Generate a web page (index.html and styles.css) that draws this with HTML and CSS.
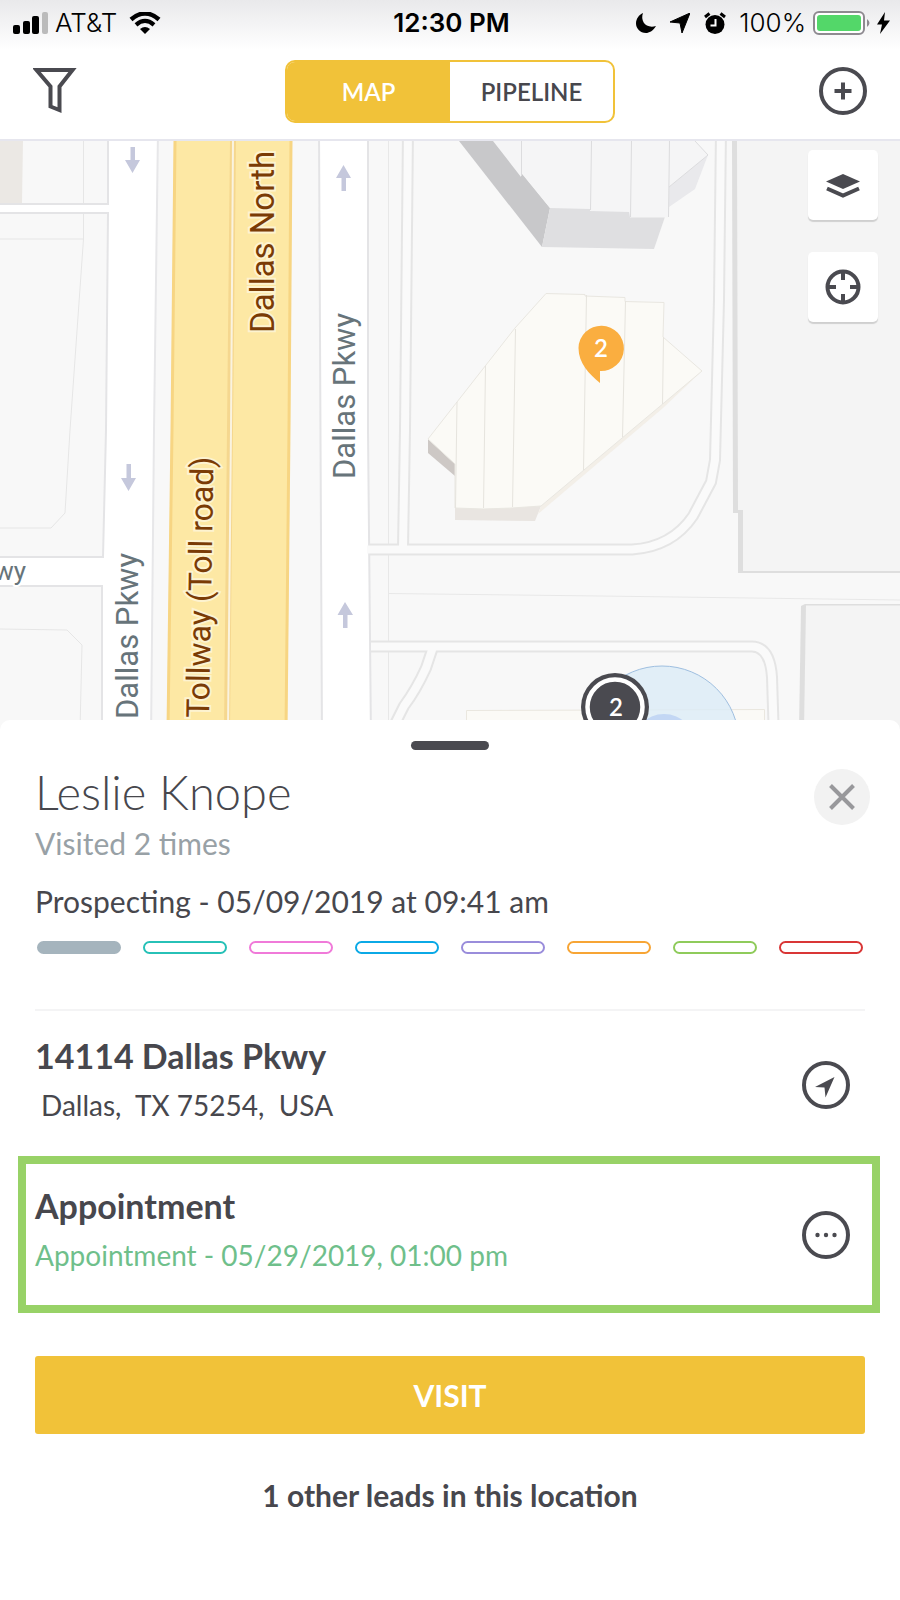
FILE: index.html
```html
<!DOCTYPE html>
<html lang="en">
<head>
    <meta charset="UTF-8">
    <meta name="viewport" content="width=device-width, initial-scale=1.0">
    <title>Leads Map</title>
    <link rel="stylesheet" href="styles.css">
</head>
<body>
    <header class="top">
        <div class="status-bar">
            <div class="status-left">
                <svg width="36" height="22" viewBox="0 0 36 22">
                    <rect x="0" y="13" width="7" height="9" rx="2"/>
                    <rect x="10" y="9" width="7" height="13" rx="2"/>
                    <rect x="19" y="4" width="7" height="18" rx="2"/>
                    <rect x="29" y="0" width="6" height="22" rx="2" fill="#bbb"/>
                </svg>
                <span class="carrier">AT&amp;T</span>
                <svg width="32" height="22" viewBox="0 0 32 22">
                    <path d="M2 7.500 Q16 -4.500 30 7.500" fill="none" stroke="#000" stroke-width="4.500"/>
                    <path d="M7 12.800 Q16 5 25 12.800" fill="none" stroke="#000" stroke-width="4.200"/>
                    <path d="M11 17 Q16 13 21 17 L16 22 Z"/>
                </svg>
            </div>
            <span class="clock">12:30 PM</span>
            <div class="status-right">
                <svg width="20" height="20" viewBox="0 0 20 20">
                    <path d="M7 0 C4 8 10 16 20 13 C17 18 13 20 10 20 C4 20 0 15 0 10.500 C0 6 3 1.500 7 0Z"/>
                </svg>
                <svg width="20" height="20" viewBox="0 0 20 20">
                    <path d="M20 0 L12 20 L10 10 L0 9 Z" stroke="#000" stroke-linejoin="round"/>
                </svg>
                <svg width="22" height="22" viewBox="0 0 22 22">
                    <circle cx="11" cy="12.500" r="9.500"/>
                    <path d="M1 5 L5.500 1.500 M21 5 L16.500 1.500" stroke="#000" stroke-width="3"/>
                    <path d="M11.500 7 V13.500 H6.500" fill="none" stroke="#fff" stroke-width="2"/>
                </svg>
                <span class="percent">100%</span>
                <svg width="58" height="24" viewBox="0 0 58 24">
                    <rect x="1" y="1" width="50" height="22" rx="5" fill="#fff" stroke="#8e8a90" stroke-width="2"/>
                    <rect x="4" y="4" width="44" height="16" rx="3" fill="#53d769"/>
                    <path d="M54 8 Q59 12 54 16Z" fill="#8e8a90"/>
                </svg>
                <svg width="13" height="22" viewBox="0 0 13 22">
                    <path d="M8 0 L0 12.500 H5 L3 22 L13 8.500 H7 Z"/>
                </svg>
            </div>
        </div>
        <nav class="nav-bar">
            <button class="icon-btn" aria-label="Filter">
                <svg width="48" height="48" viewBox="0 0 48 48">
                    <path d="M3.500 3 H39.500 L26.500 19.500 V43 L17.500 39.500 V19.500 Z" fill="none" stroke="#4a4a50" stroke-width="4"/>
                </svg>
            </button>
            <div class="tabs">
                <button class="tab active">MAP</button>
                <button class="tab">PIPELINE</button>
            </div>
            <button class="icon-btn" aria-label="Add lead">
                <svg width="48" height="48" viewBox="0 0 48 48">
                    <circle cx="24" cy="24" r="22" fill="none" stroke="#4a4a50" stroke-width="4"/>
                    <path d="M24 15.500 V32.500 M15.500 24 H32.500" stroke="#4a4a50" stroke-width="4"/>
                </svg>
            </button>
        </nav>
    </header>

    <main>
        <section class="map">
            <svg class="map-canvas" viewBox="0 141 900 589" preserveAspectRatio="xMidYMid slice">
                <rect x="0" y="141" width="900" height="589" fill="#f8f8f8"/>

                <!-- left blocks and southbound road -->
                <path d="M-5 130 H158 L154 430 L151 740 H-5Z" fill="#fff" stroke="#e7e7e9" stroke-width="2"/>
                <g fill="#f8f8f8" stroke="#e4e4e6" stroke-width="2">
                    <path d="M-5 130 H108 V204 H-5Z"/>
                    <path d="M-5 213 H108 L106 430 L103 557 H-5Z"/>
                    <path d="M-5 586 H102 V740 H-5Z"/>
                </g>
                <path d="M0 141 H23 L22 203 H0Z" fill="#ebe8e4"/>
                <g fill="none" stroke="#e6e6e6">
                    <path d="M83.500 141 V203 M83.500 214 V239 L70 430 L65 513 L51 528 H0 M0 239 H83"/>
                    <path d="M0 629 L67 630 L82 645 L80 730"/>
                </g>

                <!-- tollway -->
                <path d="M174 141 H292 L290 430 L287 730 H167 L171 430Z" fill="#fde8a4"/>
                <path d="M175 141 L172 430 L168 730 M291 141 L289 430 L286 730" fill="none" stroke="#f7d583" stroke-width="3"/>
                <path d="M233 141 L230 430 L227 730" fill="none" stroke="#f5d78f" stroke-width="6"/>
                <path d="M233 141 L231 430 L228 730" fill="none" stroke="#faf3e0" stroke-width="2"/>

                <!-- northbound road -->
                <path d="M319 130 H368 V430 L371 740 H322Z" fill="#fff" stroke="#e4e4e6" stroke-width="2"/>

                <!-- parking lanes -->
                <g fill="none" stroke="#e8e8e8">
                    <path d="M388.500 141 V730"/>
                    <path d="M388 593.500 L600 596 L900 600"/>
                </g>
                <g fill="none" stroke="#e5e5e5" stroke-width="12">
                    <path d="M408 130 L405 430 L403 548"/>
                    <path d="M721 130 L719 300 L715 460 L711 482 L693 516 Q672 547 632 549.500 H369"/>
                    <path d="M433 647 L426 668 Q416 690 404 706 L392 730"/>
                    <path d="M371 646.500 H752 Q770 647 772 677 L774 740"/>
                </g>
                <g fill="none" stroke="#fafafa" stroke-width="8">
                    <path d="M408 130 L405 430 L403 548"/>
                    <path d="M721 130 L719 300 L715 460 L711 482 L693 516 Q672 547 632 549.500 H367"/>
                    <path d="M433 647 L426 668 Q416 690 404 706 L392 730"/>
                    <path d="M371 646.500 H752 Q770 647 772 677 L774 740"/>
                </g>

                <!-- grey buildings on the right -->
                <path d="M732 141 H900 V573 H738 V513 H733Z" fill="#dedede"/>
                <path d="M737 141 H900 V571 H743 V510 H738Z" fill="#f4f4f4"/>
                <path d="M801 606 L805 604 H900 V730 H799Z" fill="#dedede"/>
                <path d="M806 605.500 H900 V730 H804Z" fill="#f4f4f4"/>

                <!-- north building -->
                <path d="M459 141 H495 L550 208 L542 247Z" fill="#c8c8ca"/>
                <path d="M550 208 H668 L654 249 L542 247Z" fill="#dfdfe1"/>
                <path d="M669 187 L708 155 L695 189 L669 207Z" fill="#e9e9ec"/>
                <path d="M493 141 H695 L708 155 L669 187 L668 217.500 H630 L629 212 L590 211 V209 L550 208 L521 172 V177Z" fill="#f5f5f6"/>
                <path d="M521.500 141 V176 M591.500 141 L590.500 210 M631.500 141 L630.500 217 M669.500 141 L668.500 217 M695 141 L708 155 L669 187" fill="none" stroke="#dcdcde"/>

                <!-- main building -->
                <path d="M428 439 L455 464 V476 L428 453Z" fill="#cdc8c5"/>
                <path d="M455 508 L541 506 L535 521 L455 520Z" fill="#e9e5e1"/>
                <path d="M541 506 L702 371 L663 408 L538 514Z" fill="#f3efe8"/>
                <path d="M546 293.500 L585 294.500 V296 L625 297.500 V301.500 L664 302.500 L663 337 L702 371 L541 506 L512 508 L483 509 L455 508 V464 L428 439 L457 402 L486 365 L515 328Z" fill="#fbfaf6" stroke="#e9e7e1"/>
                <path d="M457 402 L455.500 508 M485.500 366 L483.500 508 M515.500 329 L512.500 507 M586.500 295 L583.500 470 M625.500 301 L622.500 437 M663.500 337 L662.500 404" fill="none" stroke="#e6e4de"/>

                <path d="M466.500 730 V710.500 L764.500 709.500 V730Z" fill="#fbfaf6" stroke="#eae7df"/>

                <!-- one-way arrows -->
                <g fill="#c5c8dc">
                    <path d="M130.500 147 H135 V160 H140 L132.500 173 L125 160 H130.500Z"/>
                    <path d="M126.500 464 H131 V478 H136 L128.500 491 L121 478 H126.500Z"/>
                    <path d="M341.500 191 H346 V178 H351 L343.500 165 L336 178 H341.500Z"/>
                    <path d="M343 628 H347.500 V615 H353 L345 602 L337.500 615 H343Z"/>
                </g>

                <!-- road names -->
                <g class="road-name">
                    <text transform="translate(355 479) rotate(-90)">Dallas Pkwy</text>
                    <text transform="translate(138 719) rotate(-90)">Dallas Pkwy</text>
                    <text class="small" x="26" y="580" text-anchor="end">wy</text>
                </g>
                <g class="road-name toll">
                    <text transform="translate(274 333) rotate(-90)">Dallas North</text>
                    <text transform="translate(209 718) rotate(-89)">Tollway (Toll road)</text>
                </g>

                <!-- current location -->
                <circle cx="662" cy="743" r="77" fill="#d9ebf7" fill-opacity="0.750" stroke="#9fbfe0"/>
                <circle cx="664" cy="746" r="32" fill="#c3d7f4"/>

                <!-- lead pins -->
                <path d="M600 383 V371 A22.700 22.700 0 1 0 578.500 348 C578.500 363 589 374 600 383Z" fill="#faae40"/>
                <text class="pin-count" x="601" y="357">2</text>
                <circle cx="615" cy="707" r="34" fill="#4a4a50"/>
                <circle cx="615" cy="707" r="27.500" fill="#4a4a50" stroke="#fff" stroke-width="4.500"/>
                <text class="pin-count" x="616" y="716">2</text>
            </svg>
            <div class="map-controls">
                <button class="map-btn" aria-label="Map layers">
                    <svg width="36" height="26" viewBox="0 0 36 26">
                        <path d="M18 2 L35 9.500 L18 17 L1 9.500Z" fill="#4a4a50"/>
                        <path d="M2 16.500 L18 23.500 L34 16.500" fill="none" stroke="#4a4a50" stroke-width="4"/>
                    </svg>
                </button>
                <button class="map-btn" aria-label="My location">
                    <svg width="36" height="36" viewBox="0 0 36 36" fill="none" stroke="#4a4a50" stroke-width="4">
                        <circle cx="18" cy="18" r="15.500"/>
                        <path d="M18 2 V11 M18 25 V34 M2 18 H11 M25 18 H34"/>
                    </svg>
                </button>
            </div>
        </section>

        <section class="sheet">
            <div class="handle"></div>
            <div class="lead-header">
                <div>
                    <h1>Leslie Knope</h1>
                    <p class="visits">Visited 2 times</p>
                </div>
                <button class="close-btn" aria-label="Close">
                    <svg width="26" height="26" viewBox="0 0 26 26">
                        <path d="M1.500 1.500 L24.500 24.500 M24.500 1.500 L1.500 24.500" stroke="#98989b" stroke-width="4"/>
                    </svg>
                </button>
            </div>
            <p class="stage">Prospecting - 05/09/2019 at 09:41 am</p>
            <div class="stages">
                <span class="pill grey"></span>
                <span class="pill teal"></span>
                <span class="pill pink"></span>
                <span class="pill blue"></span>
                <span class="pill purple"></span>
                <span class="pill orange"></span>
                <span class="pill green"></span>
                <span class="pill red"></span>
            </div>
            <div class="row address">
                <div>
                    <h2>14114 Dallas Pkwy</h2>
                    <p class="city">Dallas,&nbsp; TX 75254,&nbsp; USA</p>
                </div>
                <button class="icon-btn" aria-label="Navigate">
                    <svg width="48" height="48" viewBox="0 0 48 48">
                        <circle cx="24" cy="24" r="22" fill="none" stroke="#4a4a50" stroke-width="4"/>
                        <path d="M32.500 16 L23.500 36.500 L22.500 26.500 L13 26Z" fill="#4a4a50"/>
                    </svg>
                </button>
            </div>
            <div class="row appointment">
                <div>
                    <h2>Appointment</h2>
                    <p class="date">Appointment - 05/29/2019, 01:00 pm</p>
                </div>
                <button class="icon-btn" aria-label="Appointment options">
                    <svg width="48" height="48" viewBox="0 0 48 48" fill="#4a4a50">
                        <circle cx="24" cy="24" r="22" fill="none" stroke="#4a4a50" stroke-width="4"/>
                        <circle cx="15.500" cy="24" r="2.200"/>
                        <circle cx="24" cy="24" r="2.200"/>
                        <circle cx="32.500" cy="24" r="2.200"/>
                    </svg>
                </button>
            </div>
            <button class="visit-btn">VISIT</button>
            <p class="others">1 other leads in this location</p>
        </section>
    </main>
</body>
</html>
```

FILE: styles.css
```css
* {
    box-sizing: border-box;
}

body {
    margin: 0;
    font-family: Lato, sans-serif;
    background-color: #fff;
    color: #47474d;
}

h1, h2, p {
    margin: 0;
}

svg {
    display: block;
}

button {
    padding: 0;
    border: none;
    background: none;
    font-family: inherit;
    color: inherit;
    cursor: pointer;
}

/* Top bars */
.top {
    background: linear-gradient(#e9e9eb, #fff 50px);
    border-bottom: 2px solid #e6e6ee;
}

.status-bar {
    display: grid;
    grid-template-columns: 1fr auto 1fr;
    align-items: center;
    height: 45px;
    padding: 0 10px 0 13px;
    font-family: Inter, sans-serif;
    font-size: 26px;
    color: #000;
}

.status-left {
    display: flex;
    align-items: center;
    gap: 6px;
}

.status-right {
    display: flex;
    align-items: center;
    justify-content: flex-end;
    gap: 14px;
}

.carrier {
    font-weight: 300;
    margin-right: 6px;
}

.clock {
    font-weight: 600;
}

.percent {
    font-weight: 300;
    margin: 0 -7px 0 -1px;
}

.status-right svg:last-child {
    margin-left: -8px;
}

.nav-bar {
    display: flex;
    align-items: center;
    justify-content: space-between;
    height: 94px;
    padding: 0 33px 2px;
}

.icon-btn {
    flex: none;
    width: 48px;
    height: 48px;
}

.tabs {
    display: flex;
    width: 330px;
    height: 63px;
    border: 2px solid #f1c239;
    border-radius: 10px;
    overflow: hidden;
}

.tab {
    flex: 1;
    font-size: 24px;
    font-weight: 600;
}

.tab.active {
    background-color: #f1c239;
    color: #fff;
}

/* Map */
.map {
    position: relative;
    height: 589px;
    overflow: hidden;
}

.map-canvas {
    width: 100%;
    height: 100%;
}

.road-name text {
    font-family: Roboto, sans-serif;
    font-size: 31px;
    fill: #67747a;
    stroke: #fff;
    stroke-width: 4px;
    paint-order: stroke;
}

.road-name .small {
    font-size: 26px;
}

.toll text {
    font-size: 33px;
    fill: #7a3b05;
    stroke: #fdf3d0;
}

.toll text:last-child {
    font-size: 32px;
}

.pin-count {
    font-family: Lato, sans-serif;
    font-size: 24px;
    font-weight: 600;
    fill: #fff;
    text-anchor: middle;
}

.map-controls {
    position: absolute;
    top: 9px;
    right: 22px;
    display: flex;
    flex-direction: column;
    gap: 32px;
}

.map-btn {
    display: flex;
    align-items: center;
    justify-content: center;
    width: 70px;
    height: 70px;
    border-radius: 5px;
    background-color: #fff;
    box-shadow: 0 2px 1px rgba(0, 0, 0, 0.15);
}

/* Lead details */
.sheet {
    position: relative;
    margin-top: -10px;
    padding: 21px 0 40px;
    border-radius: 10px 10px 0 0;
    background-color: #fff;
}

.handle {
    width: 78px;
    height: 9px;
    margin: 0 auto 11px;
    border-radius: 5px;
    background-color: #4a4a50;
}

.lead-header {
    display: flex;
    justify-content: space-between;
    align-items: flex-start;
    padding: 0 30px 0 35px;
}

h1 {
    font-size: 47px;
    line-height: 62px;
    font-weight: 300;
}

.visits {
    font-size: 30px;
    line-height: 40px;
    color: #98a1a6;
}

.close-btn {
    display: flex;
    align-items: center;
    justify-content: center;
    width: 56px;
    height: 56px;
    margin-top: 8px;
    border-radius: 50%;
    background-color: #f2f2f2;
}

.stage {
    margin: 18px 35px 20px;
    font-size: 30px;
    line-height: 40px;
}

.stages {
    display: flex;
    gap: 22px;
    padding: 0 37px;
}

.pill {
    flex: 1;
    height: 13px;
    border: 2px solid;
    border-radius: 7px;
}

.grey {
    color: #a5b4bd;
    background-color: #a5b4bd;
}

.teal { color: #27c1b7; }
.pink { color: #f07ad9; }
.blue { color: #0ba9e6; }
.purple { color: #9a8ddb; }
.orange { color: #f7a535; }
.green { color: #8fcb5b; }
.red { color: #d93636; }

.row {
    display: flex;
    justify-content: space-between;
}

.row .icon-btn {
    margin-top: 27px;
}

.address {
    margin: 55px 35px 0;
    padding: 23px 15px 33px 0;
    border-top: 2px solid #f4f4f5;
}

h2 {
    margin-bottom: 9px;
    font-size: 34px;
    line-height: 44px;
    font-weight: 700;
}

.city, .date {
    font-size: 28px;
    line-height: 36px;
}

.city {
    padding-left: 6px;
}

.date {
    color: #6fbf8b;
}

.appointment {
    margin: 0 20px 0 18px;
    padding: 20px 22px 32px 9px;
    border: 8px solid #98d267;
}

.visit-btn {
    display: block;
    width: calc(100% - 70px);
    height: 78px;
    margin: 43px 35px 41px;
    border-radius: 3px;
    background-color: #f1c239;
    color: #fff;
    font-size: 30px;
    font-weight: 700;
}

.others {
    font-size: 30px;
    line-height: 40px;
    font-weight: 700;
    text-align: center;
}
```
